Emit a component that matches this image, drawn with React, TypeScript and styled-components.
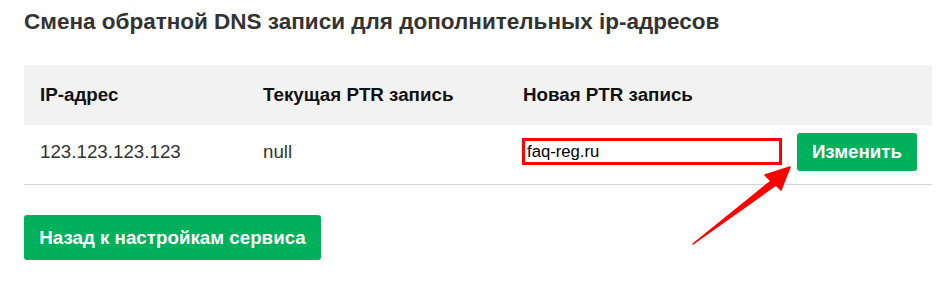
import React from 'react'
import styled, { createGlobalStyle } from 'styled-components'

const GlobalStyle = createGlobalStyle`
  html, body {
    margin: 0;
    padding: 0;
    background: #fff;
    font-family: 'Liberation Sans', Arial, sans-serif;
  }
`

const Page = styled.div`
  position: relative;
  width: 948px;
  height: 286px;
  padding: 0 16px 0 24px;
  box-sizing: border-box;
  overflow: hidden;
`

const Title = styled.h2`
  margin: 0;
  padding-top: 8px;
  height: 65px;
  box-sizing: border-box;
  font-size: 22.5px;
  line-height: 28px;
  font-weight: 700;
  color: #333;
`

const Table = styled.div`
  width: 908px;
`

const Row = styled.div<{ $head?: boolean }>`
  display: grid;
  grid-template-columns: 223px 260px 1fr;
  align-items: center;
  box-sizing: border-box;
  height: ${({ $head }) => ($head ? '60px' : '60px')};
  padding-bottom: ${({ $head }) => ($head ? '0' : '6px')};
  background: ${({ $head }) => ($head ? '#f2f2f2' : '#fff')};
  border-bottom: ${({ $head }) => ($head ? 'none' : '1px solid #d3d3d3')};
`

const Cell = styled.div<{ $head?: boolean }>`
  display: flex;
  align-items: center;
  gap: 15px;
  padding-left: 16px;
  font-size: 18.75px;
  font-weight: ${({ $head }) => ($head ? 700 : 400)};
  color: ${({ $head }) => ($head ? '#111' : '#333')};
`

const PtrInput = styled.input`
  width: 260px;
  height: 27px;
  box-sizing: border-box;
  margin-left: -1px;
  border: 3px solid #f00;
  padding: 0 2px;
  font-family: 'Liberation Sans', Arial, sans-serif;
  font-size: 16.7px;
  color: #000;
  outline: none;
`

const Button = styled.button<{ $wide?: boolean }>`
  border: none;
  border-radius: 3px;
  background: #00b05b;
  color: #fff;
  font-family: 'Liberation Sans', Arial, sans-serif;
  font-size: 18.75px;
  font-weight: 700;
  height: ${({ $wide }) => ($wide ? '45px' : '38px')};
  width: ${({ $wide }) => ($wide ? '297px' : '120px')};
  padding: 0;
  cursor: pointer;
`

const Footer = styled.div`
  padding-top: 30px;
`

const Arrow = styled.svg`
  position: absolute;
  left: 0;
  top: 0;
  pointer-events: none;
`

export default function App(): JSX.Element {
  return (
    <Page>
      <GlobalStyle />
      <Title>Смена обратной DNS записи для дополнительных ip-адресов</Title>
      <Table>
        <Row $head>
          <Cell $head>IP-адрес</Cell>
          <Cell $head>Текущая PTR запись</Cell>
          <Cell $head>Новая PTR запись</Cell>
        </Row>
        <Row>
          <Cell>123.123.123.123</Cell>
          <Cell>null</Cell>
          <Cell>
            <PtrInput defaultValue='faq-reg.ru' />
            <Button>Изменить</Button>
          </Cell>
        </Row>
      </Table>
      <Footer>
        <Button $wide>Назад к настройкам сервиса</Button>
      </Footer>
      <Arrow width='948' height='286' viewBox='0 0 948 286'>
        <polygon
          points='693,244 771,181 765,175 790,167 781,190 776,185'
          fill='#f00'
          stroke='#f00'
          strokeWidth='1.5'
          strokeLinejoin='round'
        />
      </Arrow>
    </Page>
  )
}
